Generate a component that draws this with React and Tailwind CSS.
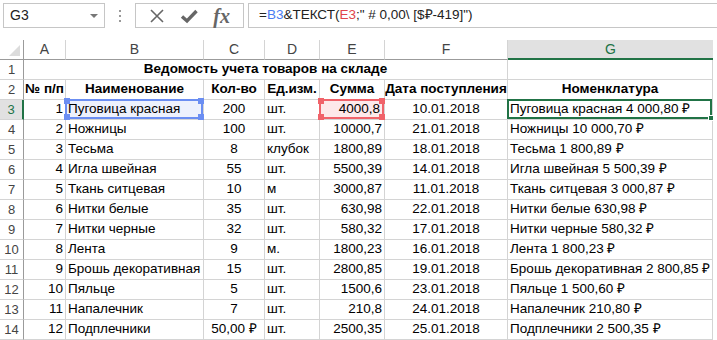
import React from "react";

const rows = [
  ["1", "Пуговица красная", "200", "шт.", "4000,8", "10.01.2018", "Пуговица красная 4 000,80 ₽"],
  ["2", "Ножницы", "100", "шт.", "10000,7", "21.01.2018", "Ножницы 10 000,70 ₽"],
  ["3", "Тесьма", "8", "клубок", "1800,89", "18.01.2018", "Тесьма 1 800,89 ₽"],
  ["4", "Игла швейная", "55", "шт.", "5500,39", "14.01.2018", "Игла швейная 5 500,39 ₽"],
  ["5", "Ткань ситцевая", "10", "м", "3000,87", "11.01.2018", "Ткань ситцевая 3 000,87 ₽"],
  ["6", "Нитки белые", "35", "шт.", "630,98", "22.01.2018", "Нитки белые 630,98 ₽"],
  ["7", "Нитки черные", "32", "шт.", "580,32", "17.01.2018", "Нитки черные 580,32 ₽"],
  ["8", "Лента", "9", "м.", "1800,23", "16.01.2018", "Лента 1 800,23 ₽"],
  ["9", "Брошь декоративная", "15", "шт.", "2800,85", "19.01.2018", "Брошь декоративная 2 800,85 ₽"],
  ["10", "Пяльце", "5", "шт.", "1500,6", "23.01.2018", "Пяльце 1 500,60 ₽"],
  ["11", "Напалечник", "7", "шт.", "210,8", "24.01.2018", "Напалечник 210,80 ₽"],
  ["12", "Подплечники", "50,00 ₽", "шт.", "2500,35", "25.01.2018", "Подплечники 2 500,35 ₽"],
];

const align = ["justify-end", "justify-start", "justify-center", "justify-start", "justify-end", "justify-center", "justify-start"];

function Handles({ color }) {
  return (
    <>
      <span className={`absolute -left-[3px] -top-[3px] w-[6px] h-[6px] ${color}`} />
      <span className={`absolute -right-[3px] -top-[3px] w-[6px] h-[6px] ${color}`} />
      <span className={`absolute -left-[3px] -bottom-[3px] w-[6px] h-[6px] ${color}`} />
      <span className={`absolute -right-[3px] -bottom-[3px] w-[6px] h-[6px] ${color}`} />
    </>
  );
}

function Cell({ children, className = "" }) {
  return (
    <div className={`h-[20px] border-r border-b border-[#d4d4d4] flex items-center px-[2px] whitespace-nowrap overflow-visible ${className}`}>
      {children}
    </div>
  );
}

function RowHead({ n, active }) {
  return (
    <div
      className={`h-[20px] border-b border-[#d4d4d4] flex items-center justify-center text-[13px] ${
        active ? "bg-[#e1e1e1] text-[#217346] border-r-2 border-r-[#217346]" : "border-r border-r-[#9b9b9b] text-[#444]"
      }`}
    >
      {n}
    </div>
  );
}

export default function App() {
  return (
    <div className="w-[717px] h-[340px] bg-white overflow-hidden text-black" style={{ fontFamily: '"Liberation Sans", Arial, sans-serif' }}>
      {/* formula bar */}
      <div className="flex items-center h-[33px] pt-[3px] pb-[5px]">
        <div className="ml-[3px] w-[102px] h-[25px] border border-[#c6c6c6] flex items-center justify-between pl-[6px] pr-[6px] text-[14px] text-[#222]">
          <span>G3</span>
          <span className="w-0 h-0 border-l-[4px] border-r-[4px] border-t-[4px] border-l-transparent border-r-transparent border-t-[#777]" />
        </div>
        <div className="w-[30px] flex flex-col items-center gap-[3px]">
          <span className="w-[2px] h-[2px] bg-[#999]" />
          <span className="w-[2px] h-[2px] bg-[#999]" />
          <span className="w-[2px] h-[2px] bg-[#999]" />
        </div>
        <div className="w-[109px] h-[25px] border border-[#c6c6c6] flex items-center justify-around px-[6px]">
          <svg width="16" height="16" viewBox="0 0 16 16">
            <path d="M2 2 L14 14 M14 2 L2 14" stroke="#666" strokeWidth="1.6" fill="none" />
          </svg>
          <svg width="20" height="16" viewBox="0 0 20 16">
            <path d="M3 8.5 L8 13 L17.5 3" stroke="#666" strokeWidth="3.4" fill="none" strokeLinejoin="miter" />
          </svg>
          <span className="text-[20px] italic font-bold text-[#666] leading-none" style={{ fontFamily: '"Liberation Serif", "Times New Roman", serif' }}>
            fx
          </span>
        </div>
        <div className="ml-[4px] flex-1 h-[25px] border-y border-l border-[#c6c6c6] flex items-center pl-[10px] text-[13.5px] text-[#222] whitespace-nowrap">
          =<span className="text-[#4a7cf2]">B3</span>&amp;ТЕКСТ(<span className="text-[#e0454c]">E3</span>;" # 0,00\ [$₽-419]")
        </div>
      </div>

      <div className="h-[7px]" />

      {/* grid */}
      <div className="grid grid-cols-[24px_42px_138px_61px_55px_65px_123px_205px] text-[13.5px]">
        {/* column headers */}
        <div className="h-[20px] border-r border-b border-[#9b9b9b] flex items-end justify-end p-[3px]">
          <svg width="11" height="11" viewBox="0 0 11 11">
            <path d="M11 0 L11 11 L0 11 Z" fill="#dcdcdc" />
          </svg>
        </div>
        {["A", "B", "C", "D", "E", "F"].map((c) => (
          <div key={c} className="h-[20px] border-r border-[#d4d4d4] border-b border-b-[#9b9b9b] flex items-center justify-center text-[#444] text-[14px]">
            {c}
          </div>
        ))}
        <div className="h-[20px] bg-[#e1e1e1] border-b-2 border-[#217346] flex items-center justify-center text-[#217346] text-[14px]">G</div>

        {/* row 1 */}
        <RowHead n="1" />
        <Cell className="col-span-6 justify-center font-bold">Ведомость учета товаров на складе</Cell>
        <Cell />

        {/* row 2 */}
        <RowHead n="2" />
        <Cell className="justify-center font-bold">№ п/п</Cell>
        <Cell className="justify-center font-bold">Наименование</Cell>
        <Cell className="justify-center font-bold">Кол-во</Cell>
        <Cell className="justify-center font-bold">Ед.изм.</Cell>
        <Cell className="justify-center font-bold">Сумма</Cell>
        <Cell className="justify-center font-bold">Дата поступления</Cell>
        <Cell className="justify-center font-bold">Номенклатура</Cell>

        {rows.map((r, i) => (
          <React.Fragment key={i}>
            <RowHead n={String(i + 3)} active={i === 0} />
            {r.map((v, j) => {
              if (i === 0 && j === 1) {
                return (
                  <Cell key={j} className={`relative ${align[j]}`}>
                    <span className="absolute -left-[1px] -top-[1px] right-0 bottom-0 border-2 border-[#6b8ef2] bg-[#edf1fd]">
                      <Handles color="bg-[#6b8ef2]" />
                    </span>
                    <span className="relative">{v}</span>
                  </Cell>
                );
              }
              if (i === 0 && j === 4) {
                return (
                  <Cell key={j} className={`relative ${align[j]}`}>
                    <span className="absolute -left-[1px] -top-[1px] right-0 bottom-0 border-2 border-[#f0636a] bg-[#fde9ea]">
                      <Handles color="bg-[#f0636a]" />
                    </span>
                    <span className="relative pr-[2px]">{v}</span>
                  </Cell>
                );
              }
              if (i === 0 && j === 6) {
                return (
                  <Cell key={j} className={`relative ${align[j]}`}>
                    <span className="absolute -left-[1px] -top-[1px] right-0 bottom-0 border-2 border-[#217346]">
                      <span className="absolute -right-[4px] -bottom-[4px] w-[6px] h-[6px] bg-[#217346] border border-white" />
                    </span>
                    <span className="relative">{v}</span>
                  </Cell>
                );
              }
              return (
                <Cell key={j} className={align[j]}>
                  {v}
                </Cell>
              );
            })}
          </React.Fragment>
        ))}
      </div>
    </div>
  );
}
